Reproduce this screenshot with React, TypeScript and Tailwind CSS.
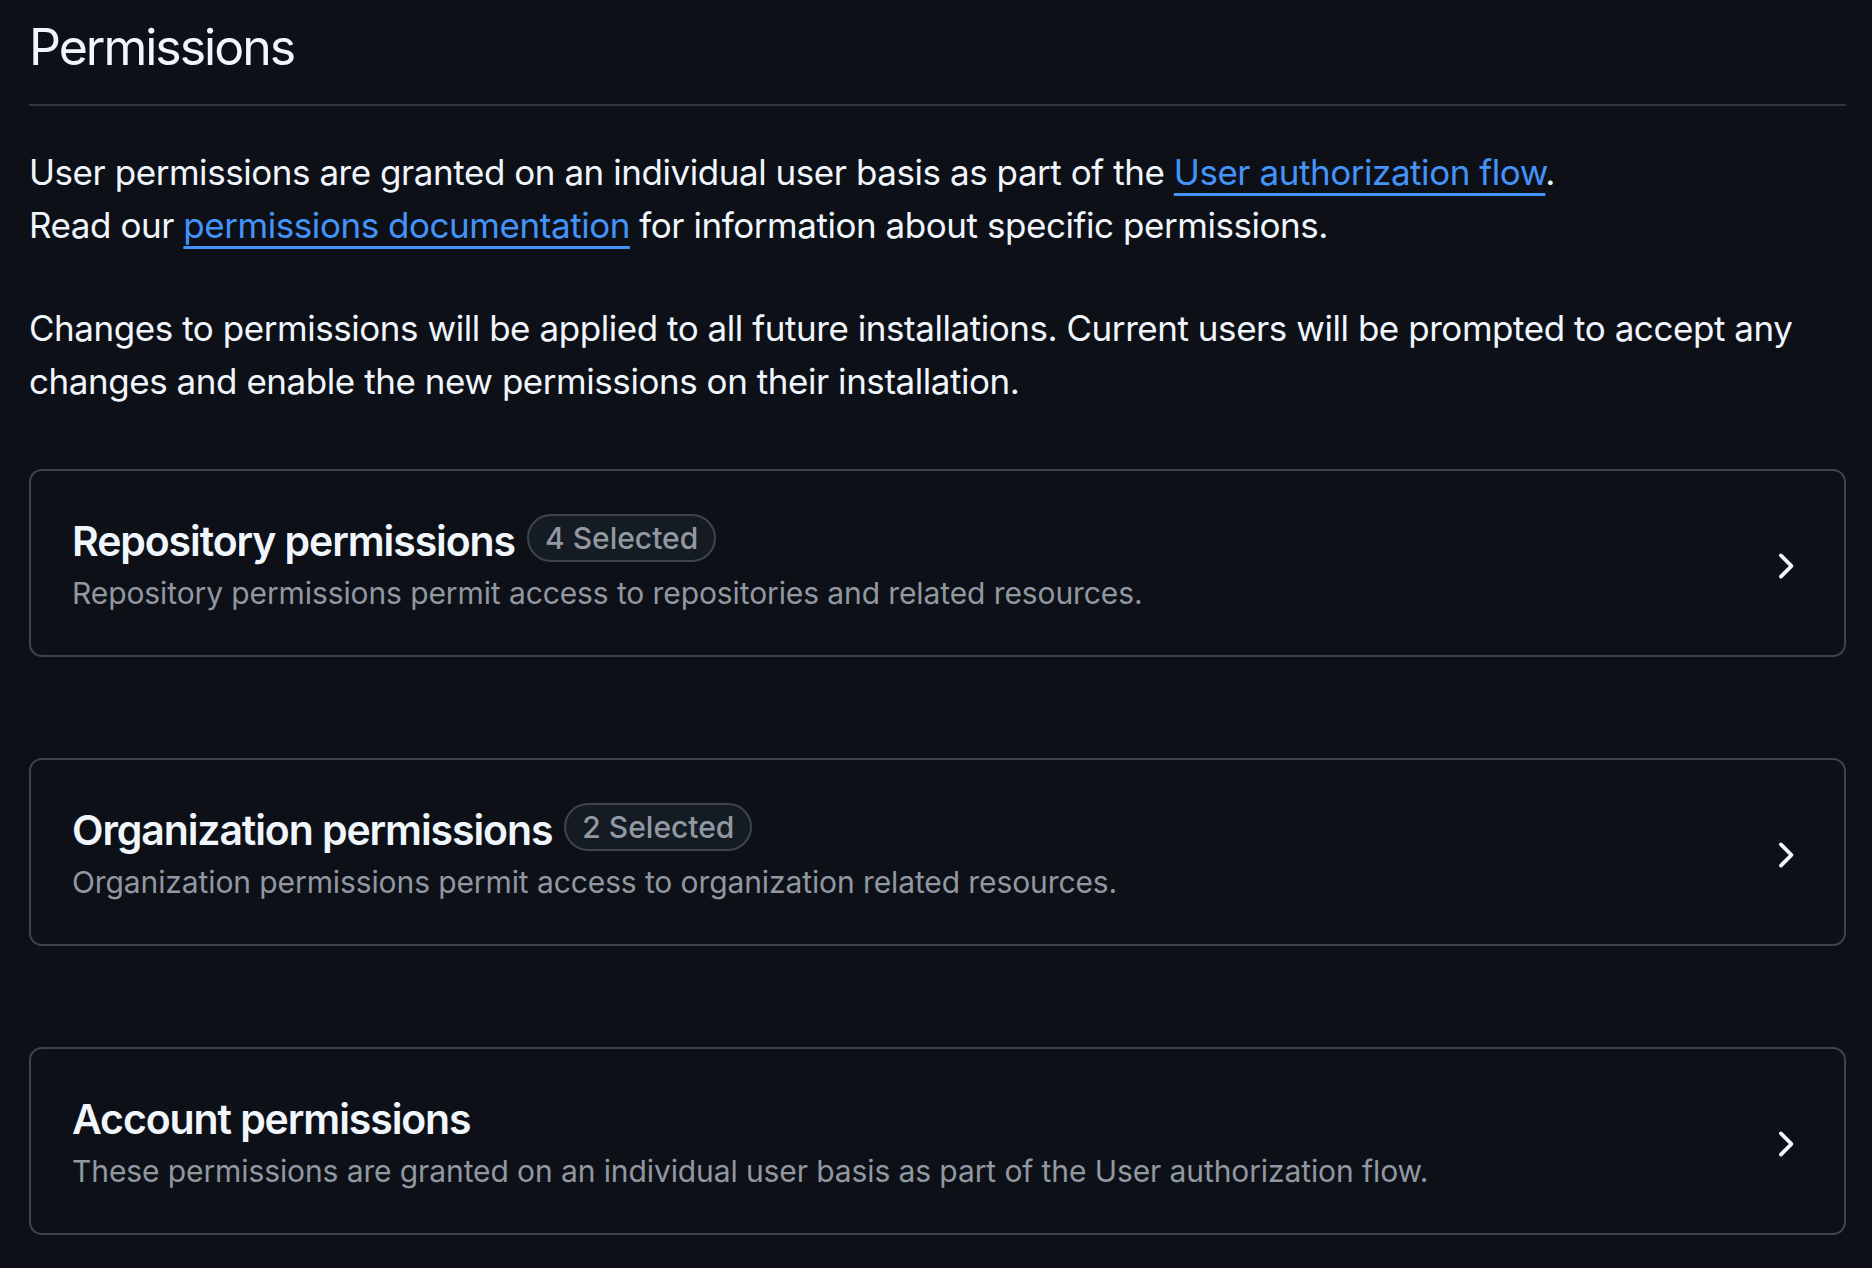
import React from "react";

type PermissionGroup = {
  title: string;
  description: string;
  selected?: number;
};

const groups: PermissionGroup[] = [
  {
    title: "Repository permissions",
    description: "Repository permissions permit access to repositories and related resources.",
    selected: 4,
  },
  {
    title: "Organization permissions",
    description: "Organization permissions permit access to organization related resources.",
    selected: 2,
  },
  {
    title: "Account permissions",
    description: "These permissions are granted on an individual user basis as part of the User authorization flow.",
  },
];

function ChevronRight() {
  return (
    <svg viewBox="0 0 16 16" className="w-[40px] h-[40px] shrink-0" fill="#f0f6fc" aria-hidden="true">
      <path d="M6.22 3.22a.75.75 0 0 1 1.06 0l4.25 4.25a.75.75 0 0 1 0 1.06l-4.25 4.25a.751.751 0 0 1-1.042-.018.751.751 0 0 1-.018-1.042L9.94 8 6.22 4.28a.75.75 0 0 1 0-1.06Z" />
    </svg>
  );
}

function PermissionCard({ group }: { group: PermissionGroup }) {
  return (
    <div className="flex items-center justify-between border-2 border-[#3d444d] rounded-[13px] pl-[41px] pr-[40px] pt-[45px] pb-[39px] cursor-pointer">
      <div className="flex flex-col gap-[4px]">
        <div className="flex items-start gap-[12px]">
          <h3 className="text-[41px] leading-[51px] font-semibold tracking-[-1.1px] text-[#f0f6fc]">{group.title}</h3>
          {group.selected !== undefined && (
            <span className="mt-[-2px] h-[48px] px-[16px] flex items-center rounded-full border-2 border-[#3d444d] bg-[#151b23] text-[30px] font-medium text-[#9198a1]">
              {group.selected} Selected
            </span>
          )}
        </div>
        <p className="text-[30px] leading-[45px] tracking-[-0.1px] text-[#9198a1]">{group.description}</p>
      </div>
      <ChevronRight />
    </div>
  );
}

export default function App() {
  return (
    <div
      className="min-h-screen bg-[#0d1117] text-[#f0f6fc] pl-[29px] pr-[26px] pt-[16px] pb-[30px]"
      style={{ fontFamily: "Inter, 'Noto Sans', sans-serif" }}
    >
      <div className="border-b-2 border-[#30363d] pb-[26px]">
        <h2 className="text-[50px] leading-[62px] font-normal tracking-[-2px]">Permissions</h2>
      </div>

      <p className="mt-[40px] text-[35px] leading-[53px] tracking-[-0.45px]">
        User permissions are granted on an individual user basis as part of the{" "}
        <a href="#" className="text-[#4493f8] underline decoration-[length:3px] underline-offset-[8px]">
          User authorization flow
        </a>
        .
        <br />
        Read our{" "}
        <a href="#" className="text-[#4493f8] underline decoration-[length:3px] underline-offset-[8px]">
          permissions documentation
        </a>{" "}
        for information about specific permissions.
      </p>

      <p className="mt-[50px] text-[35px] leading-[53px] tracking-[-0.45px]">
        Changes to permissions will be applied to all future installations. Current users will be prompted to accept any
        <br />
        changes and enable the new permissions on their installation.
      </p>

      <div className="mt-[61px] flex flex-col gap-[101px]">
        {groups.map((group) => (
          <PermissionCard key={group.title} group={group} />
        ))}
      </div>
    </div>
  );
}
